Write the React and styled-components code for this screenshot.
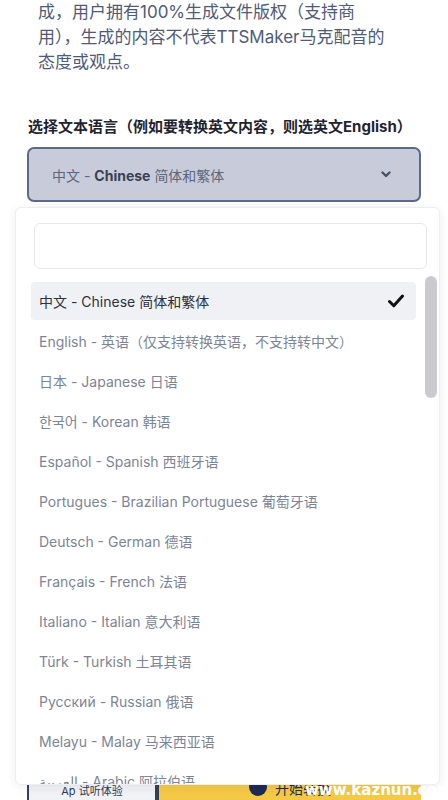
import React from 'react';
import styled, { createGlobalStyle } from 'styled-components';

const GlobalStyle = createGlobalStyle`
    body {
        margin: 0;
        background: #ffffff;
        font-family: Inter, "Noto Sans CJK SC", sans-serif;
    }
`;

const languages = [
    { id: 'zh', native: '中文', en: 'Chinese', cn: '简体和繁体' },
    { id: 'en', native: 'English', en: '英语（仅支持转换英语，不支持转中文）', cn: '' },
    { id: 'ja', native: '日本', en: 'Japanese', cn: '日语' },
    { id: 'ko', native: '한국어', en: 'Korean', cn: '韩语' },
    { id: 'es', native: 'Español', en: 'Spanish', cn: '西班牙语' },
    { id: 'pt', native: 'Portugues', en: 'Brazilian Portuguese', cn: '葡萄牙语' },
    { id: 'de', native: 'Deutsch', en: 'German', cn: '德语' },
    { id: 'fr', native: 'Français', en: 'French', cn: '法语' },
    { id: 'it', native: 'Italiano', en: 'Italian', cn: '意大利语' },
    { id: 'tr', native: 'Türk', en: 'Turkish', cn: '土耳其语' },
    { id: 'ru', native: 'Русский', en: 'Russian', cn: '俄语' },
    { id: 'ms', native: 'Melayu', en: 'Malay', cn: '马来西亚语' },
    { id: 'ar', native: 'العربية', en: 'Arabic', cn: '阿拉伯语' }
];

const ChevronIcon = () => (
    <svg width="10" height="7" viewBox="0 0 10 7">
        <path d="M1.5 1.5 L5 5 L8.5 1.5" fill="none" stroke="#4a5266" strokeWidth="2.4" strokeLinecap="round" strokeLinejoin="round" />
    </svg>
);

const CheckIcon = () => (
    <svg width="16" height="14" viewBox="0 0 16 14">
        <path d="M1.5 7.5 L5.8 11.8 L14.5 2" fill="none" stroke="#111111" strokeWidth="3" strokeLinecap="round" strokeLinejoin="round" />
    </svg>
);

const App = () => {
    const selected = 'zh';
    return (
        <PageStyled>
            <GlobalStyle />
            <NoteStyled>
                成，用户拥有100%生成文件版权（支持商
                <br />
                用），生成的内容不代表TTSMaker马克配音的
                <br />
                态度或观点。
            </NoteStyled>
            <LabelStyled>选择文本语言（例如要转换英文内容，则选英文English）</LabelStyled>
            <SelectWrapStyled>
                <SelectStyled>
                    <span>
                        中文 - <BoldStyled>Chinese</BoldStyled> 简体和繁体
                    </span>
                    <ChevronIcon />
                </SelectStyled>
                <PanelStyled>
                    <SearchStyled type="text" />
                    <ListWrapStyled>
                        <ListStyled>
                            {languages.map((lang) => (
                                <OptionStyled key={lang.id} $active={lang.id === selected}>
                                    <span>
                                        {lang.native} - {lang.en}
                                        {lang.cn ? ' ' + lang.cn : ''}
                                    </span>
                                    {lang.id === selected && <CheckIcon />}
                                </OptionStyled>
                            ))}
                        </ListStyled>
                        <TrackStyled>
                            <ThumbStyled />
                        </TrackStyled>
                    </ListWrapStyled>
                </PanelStyled>
            </SelectWrapStyled>
            <ButtonRowStyled>
                <GhostButtonStyled>Ap 试听体验</GhostButtonStyled>
                <PrimaryButtonStyled>
                    <DotStyled />
                    开始转换
                </PrimaryButtonStyled>
            </ButtonRowStyled>
            <WatermarkStyled>www.kaznun.com</WatermarkStyled>
        </PageStyled>
    );
};

export default App;

const PageStyled = styled.div`
    position: relative;
    width: 448px;
    height: 800px;
    overflow: hidden;
    box-sizing: border-box;
    padding: 0 27px;
`;
const NoteStyled = styled.p`
    margin: 0;
    padding-left: 11px;
    font-size: 17px;
    line-height: 25px;
    color: #4f5b78;
    white-space: nowrap;
`;
const LabelStyled = styled.div`
    margin-top: 42px;
    padding-left: 1px;
    font-size: 15px;
    line-height: 20px;
    font-weight: bold;
    color: #1f2430;
    white-space: nowrap;
`;
const SelectWrapStyled = styled.div`
    position: relative;
    margin-top: 10px;
    z-index: 2;
`;
const SelectStyled = styled.div`
    height: 55px;
    box-sizing: border-box;
    display: flex;
    align-items: center;
    justify-content: space-between;
    padding: 0 28px 0 23px;
    background-color: #c8ccda;
    border: 2px solid #5a6a88;
    border-radius: 7px;
    font-size: 14px;
    color: #5d6679;
`;
const BoldStyled = styled.b`
    color: #394156;
    font-weight: 700;
`;
const PanelStyled = styled.div`
    position: absolute;
    top: calc(100% + 5px);
    left: -12px;
    right: -19px;
    height: 578px;
    box-sizing: border-box;
    padding: 15px 2px 0 15px;
    background-color: #ffffff;
    border: 1px solid #eceef1;
    border-radius: 6px;
    box-shadow: 0 2px 10px rgba(30, 40, 60, 0.08);
    overflow: hidden;
`;
const SearchStyled = styled.input`
    display: block;
    box-sizing: border-box;
    width: calc(100% - 13px);
    height: 46px;
    margin: 0 10px 7px 3px;
    border: 1px solid #e4e7ec;
    border-radius: 6px;
    background: #ffffff;
    outline: none;
`;
const ListWrapStyled = styled.div`
    display: flex;
    gap: 9px;
`;
const ListStyled = styled.ul`
    flex: 1;
    margin: 0;
    padding: 6px 0 0;
    list-style-type: none;
    display: flex;
    flex-direction: column;
    gap: 2px;
`;
const OptionStyled = styled.li`
    height: 38px;
    display: flex;
    align-items: center;
    justify-content: space-between;
    padding: 0 12px 0 8px;
    border-radius: 4px;
    font-size: 14px;
    white-space: nowrap;
    color: ${(props) => (props.$active ? '#2c313d' : '#7c8496')};
    background-color: ${(props) => (props.$active ? '#f0f1f5' : 'transparent')};
`;
const TrackStyled = styled.div`
    width: 12px;
`;
const ThumbStyled = styled.div`
    height: 122px;
    border-radius: 6px;
    background-color: #cbcbcd;
`;
const ButtonRowStyled = styled.div`
    margin-top: 572px;
    display: flex;
    height: 44px;
`;
const GhostButtonStyled = styled.div`
    width: 130px;
    box-sizing: border-box;
    display: flex;
    align-items: flex-start;
    justify-content: center;
    padding-top: 6px;
    border: 2px solid #34405a;
    border-radius: 4px;
    background-color: #f1f2f5;
    font-size: 11px;
    color: #2f3a52;
`;
const PrimaryButtonStyled = styled.div`
    flex: 1;
    display: flex;
    align-items: flex-start;
    justify-content: center;
    padding-top: 4px;
    gap: 8px;
    border-left: 2px solid #34405a;
    background-color: #f4c945;
    font-size: 14px;
    color: #1f2a55;
`;
const DotStyled = styled.span`
    width: 18px;
    height: 18px;
    border-radius: 50%;
    background-color: #1f2a55;
`;
const WatermarkStyled = styled.div`
    position: absolute;
    left: 305px;
    top: 781px;
    z-index: 3;
    font-family: "DejaVu Sans", sans-serif;
    font-size: 15px;
    font-weight: bold;
    color: #ffffff;
`;
